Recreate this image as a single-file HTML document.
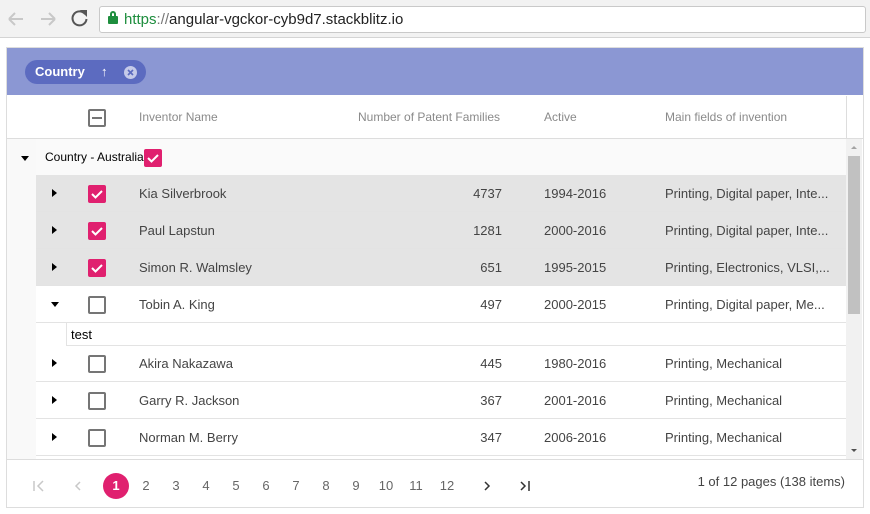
<!DOCTYPE html>
<html><head><style>
*{box-sizing:border-box;margin:0;padding:0}
body{width:870px;height:514px;background:#fff;font-family:"Liberation Sans",Arial,sans-serif;position:relative;overflow:hidden;color:#333}
.abs{position:absolute}
.bar{left:0;top:0;width:870px;height:38px;background:#f2f2f2;border-bottom:1px solid #d4d4d4}
.addr{left:99px;top:6px;width:767px;height:27px;background:#fff;border:1px solid #c9c9c9;border-radius:3px;font-size:15px;line-height:25px;padding-left:24px;color:#222}
.grid{left:6px;top:47px;width:858px;height:461px;border:1px solid #ddd}
.grp{left:7px;top:48px;width:856px;height:47px;background:#8b97d3}
.chip{left:25px;top:60px;width:121px;height:24px;border-radius:12px;background:#5c6bc0;color:#fff;font-size:13px;font-weight:bold;line-height:24px;padding-left:10px}
.hdr{font-size:12px;color:#8a8a8a}
.cb{width:18px;height:18px;border:2px solid #757575;border-radius:2px}
.cbc{width:18px;height:18px;background:#e0206f;border-radius:2px}
.row{left:36px;width:810px;height:37px;border-bottom:1px solid #e3e3e3;font-size:13px;color:#444}
.row span{position:absolute;top:11px}
.num{width:60px;text-align:right}
.tri{width:0;height:0;border-top:4px solid transparent;border-bottom:4px solid transparent;border-left:5px solid #000}
.trd{width:0;height:0;border-left:4px solid transparent;border-right:4px solid transparent;border-top:5px solid #000}
.pg{top:478px;font-size:13px;color:#666;text-align:center;width:20px}
</style></head><body>
<div class="abs bar"></div>
<svg class="abs" style="left:0;top:0" width="95" height="38">
<path d="M9 19h14M9 19l6-6M9 19l6 6" stroke="#c8c8c8" stroke-width="2" fill="none"/>
<path d="M55 19H41M55 19l-6-6M55 19l-6 6" stroke="#c8c8c8" stroke-width="2" fill="none"/>
<path d="M85 14a7 7 0 1 0 1.5 5" stroke="#555" stroke-width="2" fill="none"/>
<path d="M80 10h7v7z" fill="#555"/>
</svg>
<div class="abs addr"><span style="color:#1e8e3e">https</span><span style="color:#777">://</span>angular-vgckor-cyb9d7.stackblitz.io</div>
<div class="abs" style="left:108px;top:16px;width:10px;height:8px;background:#1e8e3e;border-radius:1px"></div>
<div class="abs" style="left:110px;top:11px;width:6px;height:7px;border:2px solid #1e8e3e;border-bottom:none;border-radius:3px 3px 0 0"></div>

<div class="abs grid"></div>
<div class="abs grp"></div>
<div class="abs chip">Country<span style="position:absolute;left:76px;top:0;font-weight:normal">&#8593;</span></div>
<svg class="abs" style="left:124px;top:66px" width="13" height="13"><circle cx="6.5" cy="6.5" r="6.5" fill="#c5cae9"/><path d="M4 4l5 5M9 4l-5 5" stroke="#5c6bc0" stroke-width="1.6"/></svg>

<div class="abs" style="left:7px;top:138px;width:856px;height:1px;background:#ddd"></div>
<div class="abs" style="left:846px;top:96px;width:1px;height:43px;background:#ddd"></div>
<div class="abs cb" style="left:88px;top:109px"></div>
<div class="abs" style="left:92px;top:117px;width:10px;height:2px;background:#757575"></div>
<div class="abs hdr" style="left:139px;top:110px">Inventor Name</div>
<div class="abs hdr" style="left:358px;top:110px">Number of Patent Families</div>
<div class="abs hdr" style="left:544px;top:110px">Active</div>
<div class="abs hdr" style="left:665px;top:110px">Main fields of invention</div>

<div class="abs" style="left:7px;top:139px;width:839px;height:37px;background:#fafafa"></div>
<div class="abs" style="left:7px;top:139px;width:29px;height:320px;background:#f9f9f9"></div>
<div class="abs trd" style="left:21px;top:156px"></div>
<div class="abs" style="left:45px;top:150px;font-size:12px;color:#000">Country - Australia</div>
<div class="abs cbc" style="left:144px;top:149px"></div>
<svg class="abs" style="left:144px;top:149px" width="18" height="18"><path d="M4 9l3.5 3.5L14 6" stroke="#fff" stroke-width="2" fill="none"/></svg>

<div class="abs row" style="top:175px;background:#e4e4e4"><div class="abs tri" style="left:16px;top:14px"></div><div class="abs cbc" style="left:52px;top:10px"></div><svg class="abs" style="left:52px;top:10px" width="18" height="18"><path d="M4 9l3.5 3.5L14 6" stroke="#fff" stroke-width="2" fill="none"/></svg><span style="left:103px">Kia Silverbrook</span><span class="num" style="left:406px">4737</span><span style="left:508px">1994-2016</span><span style="left:629px">Printing, Digital paper, Inte...</span></div>
<div class="abs row" style="top:212px;background:#e4e4e4"><div class="abs tri" style="left:16px;top:14px"></div><div class="abs cbc" style="left:52px;top:10px"></div><svg class="abs" style="left:52px;top:10px" width="18" height="18"><path d="M4 9l3.5 3.5L14 6" stroke="#fff" stroke-width="2" fill="none"/></svg><span style="left:103px">Paul Lapstun</span><span class="num" style="left:406px">1281</span><span style="left:508px">2000-2016</span><span style="left:629px">Printing, Digital paper, Inte...</span></div>
<div class="abs row" style="top:249px;background:#e4e4e4"><div class="abs tri" style="left:16px;top:14px"></div><div class="abs cbc" style="left:52px;top:10px"></div><svg class="abs" style="left:52px;top:10px" width="18" height="18"><path d="M4 9l3.5 3.5L14 6" stroke="#fff" stroke-width="2" fill="none"/></svg><span style="left:103px">Simon R. Walmsley</span><span class="num" style="left:406px">651</span><span style="left:508px">1995-2015</span><span style="left:629px">Printing, Electronics, VLSI,...</span></div>
<div class="abs row" style="top:286px"><div class="abs trd" style="left:15px;top:16px"></div><div class="abs cb" style="left:52px;top:10px"></div><span style="left:103px">Tobin A. King</span><span class="num" style="left:406px">497</span><span style="left:508px">2000-2015</span><span style="left:629px">Printing, Digital paper, Me...</span></div>
<div class="abs" style="left:66px;top:323px;width:780px;height:23px;border-left:1px solid #e3e3e3;border-bottom:1px solid #e3e3e3;font-size:13px;color:#000;padding:4px 0 0 4px">test</div>
<div class="abs row" style="top:345px"><div class="abs tri" style="left:16px;top:14px"></div><div class="abs cb" style="left:52px;top:10px"></div><span style="left:103px">Akira Nakazawa</span><span class="num" style="left:406px">445</span><span style="left:508px">1980-2016</span><span style="left:629px">Printing, Mechanical</span></div>
<div class="abs row" style="top:382px"><div class="abs tri" style="left:16px;top:14px"></div><div class="abs cb" style="left:52px;top:10px"></div><span style="left:103px">Garry R. Jackson</span><span class="num" style="left:406px">367</span><span style="left:508px">2001-2016</span><span style="left:629px">Printing, Mechanical</span></div>
<div class="abs row" style="top:419px"><div class="abs tri" style="left:16px;top:14px"></div><div class="abs cb" style="left:52px;top:10px"></div><span style="left:103px">Norman M. Berry</span><span class="num" style="left:406px">347</span><span style="left:508px">2006-2016</span><span style="left:629px">Printing, Mechanical</span></div>

<div class="abs" style="left:846px;top:139px;width:16px;height:320px;background:#f1f1f1"></div>
<div class="abs" style="left:848px;top:156px;width:12px;height:158px;background:#c1c1c1"></div>
<div class="abs" style="left:851px;top:146px;border-left:3px solid transparent;border-right:3px solid transparent;border-bottom:3px solid #a3a3a3"></div>
<div class="abs" style="left:851px;top:449px;border-left:3px solid transparent;border-right:3px solid transparent;border-top:3px solid #505050"></div>
<div class="abs" style="left:7px;top:459px;width:856px;height:1px;background:#ddd"></div>

<svg class="abs" style="left:0;top:474px" width="540" height="24">
<path d="M34 7v10M43 7l-5 5 5 5" stroke="#c8c8c8" stroke-width="1.5" fill="none"/>
<path d="M80 8l-4 4 4 4" stroke="#c8c8c8" stroke-width="1.5" fill="none"/>
<path d="M485 8l4 4-4 4" stroke="#333" stroke-width="1.5" fill="none"/>
<path d="M521 8l4 4-4 4M529 7v10" stroke="#333" stroke-width="1.5" fill="none"/>
</svg>
<div class="abs" style="left:103px;top:473px;width:26px;height:26px;border-radius:50%;background:#e0206f;color:#fff;font-size:13px;font-weight:bold;line-height:26px;text-align:center">1</div>
<div class="abs pg" style="left:136px">2</div>
<div class="abs pg" style="left:166px">3</div>
<div class="abs pg" style="left:196px">4</div>
<div class="abs pg" style="left:226px">5</div>
<div class="abs pg" style="left:256px">6</div>
<div class="abs pg" style="left:286px">7</div>
<div class="abs pg" style="left:316px">8</div>
<div class="abs pg" style="left:346px">9</div>
<div class="abs pg" style="left:376px">10</div>
<div class="abs pg" style="left:406px">11</div>
<div class="abs pg" style="left:437px">12</div>
<div class="abs" style="left:600px;top:474px;width:245px;text-align:right;font-size:13px;color:#444">1 of 12 pages (138 items)</div>
</body></html>
